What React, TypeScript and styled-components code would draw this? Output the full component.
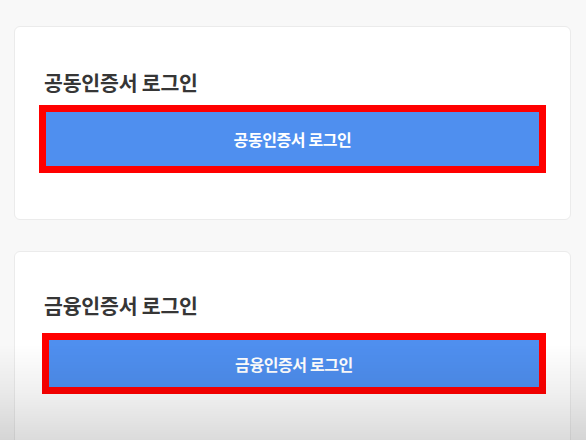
import styled, { createGlobalStyle } from 'styled-components'

const GlobalStyle = createGlobalStyle`
  html, body {
    margin: 0;
    padding: 0;
    height: 440px;
    overflow: hidden;
    background: #f8f8f8;
    font-family: 'Noto Sans CJK KR', 'Noto Sans', sans-serif;
  }
`

type CertBlock = {
  title: string
  titleGap: number
  inset: number
  buttonHeight: number
}

const blocks: CertBlock[] = [
  { title: '공동인증서 로그인', titleGap: 10, inset: 0, buttonHeight: 54 },
  { title: '금융인증서 로그인', titleGap: 15, inset: 3, buttonHeight: 47 },
]

const App = () => {
  return (
    <>
      <GlobalStyle />
      <Page>
        {blocks.map((block) => (
          <Card key={block.title}>
            <Title $gap={block.titleGap}>{block.title}</Title>
            <Highlight $inset={block.inset}>
              <LoginButton $height={block.buttonHeight}>{block.title}</LoginButton>
            </Highlight>
          </Card>
        ))}
      </Page>
      <BottomFade />
    </>
  )
}

export default App

const Page = styled.main`
  display: flex;
  flex-direction: column;
  gap: 31px;
  padding: 26px 15px 0 14px;
`

const Card = styled.section`
  background: #fff;
  border: 1px solid #ebebeb;
  border-radius: 6px;
  padding: 42px 24px 46px 24px;
  & + & {
    padding-top: 40px;
    padding-bottom: 80px;
  }
`

const Title = styled.h2<{ $gap: number }>`
  margin: 0 0 ${(p) => p.$gap}px 0;
  padding-left: 5px;
  font-size: 20.5px;
  line-height: 26px;
  font-weight: 700;
  letter-spacing: -0.2px;
  color: #363636;
`

const Highlight = styled.div<{ $inset: number }>`
  margin-left: ${(p) => p.$inset}px;
  border: 7px solid #ff0000;
`

const LoginButton = styled.button<{ $height: number }>`
  display: flex;
  align-items: center;
  justify-content: center;
  width: 100%;
  height: ${(p) => p.$height}px;
  border: 0;
  margin: 0;
  padding: 0;
  background: #4f8fef;
  color: #fff;
  font-family: inherit;
  font-size: 16px;
  font-weight: 700;
  letter-spacing: -0.4px;
`

const BottomFade = styled.div`
  position: fixed;
  left: 0;
  right: 0;
  bottom: 0;
  height: 96px;
  pointer-events: none;
  background: linear-gradient(to bottom, rgba(0, 0, 0, 0) 0%, rgba(0, 0, 0, 0.06) 50%, rgba(0, 0, 0, 0.14) 100%);
`
